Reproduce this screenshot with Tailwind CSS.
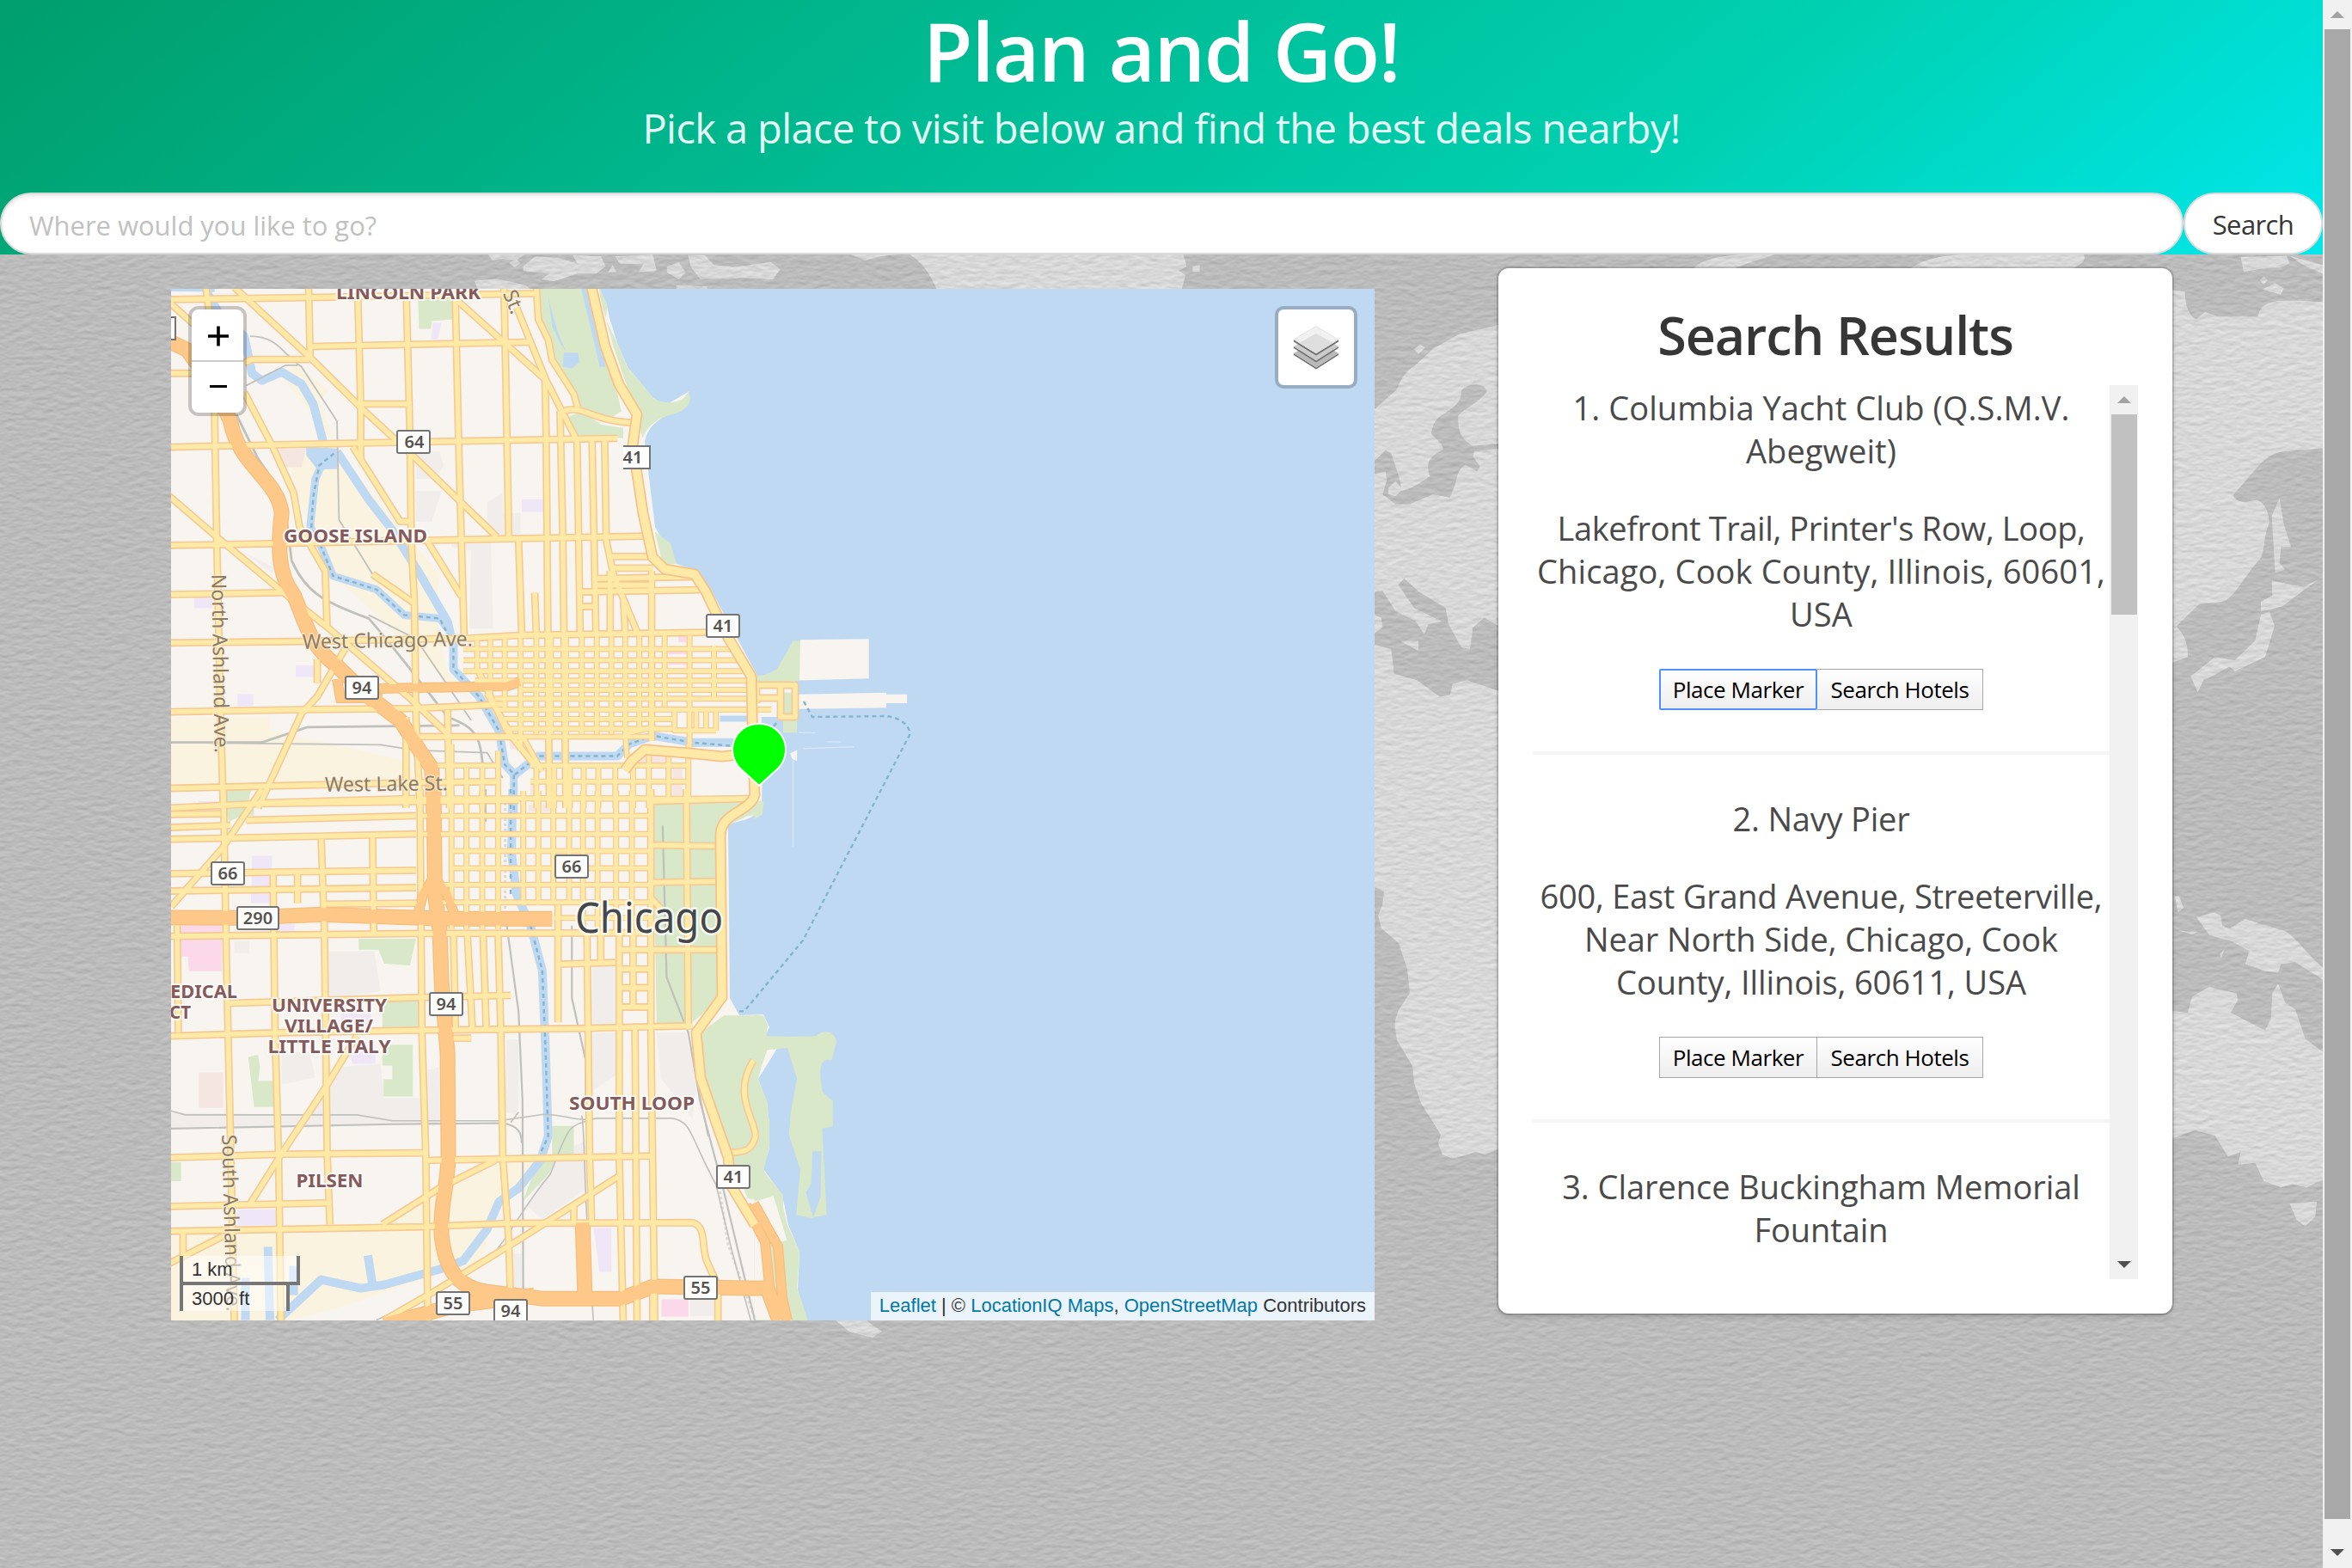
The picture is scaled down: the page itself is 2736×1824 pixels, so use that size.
<!DOCTYPE html>
<html lang="en">
<head>
<meta charset="utf-8">
<title>Plan and Go!</title>
<script src="https://cdn.jsdelivr.net/npm/@tailwindcss/browser@4"></script>
</head>
<body class="flex h-[1824px] w-[2736px] overflow-hidden bg-[#bbbbbb] font-['Open_Sans',sans-serif] text-[#4a4a4a]">

<div class="flex w-[2702px] shrink-0 flex-col">
  <!-- Hero -->
  <header class="flex h-[296px] flex-col bg-[linear-gradient(141deg,#009e6c_0%,#00d1b2_71%,#00e7eb_100%)] text-center">
    <h1 class="pt-[5px] text-[94px] leading-[108px] font-semibold tracking-[-1.42px] text-white">Plan and Go!</h1>
    <p class="mt-[6px] text-[47px] leading-[60px] tracking-[-0.6px] text-white/90">Pick a place to visit below and find the best deals nearby!</p>
    <form class="mt-[45px] flex h-[72px]">
      <div class="flex w-[2540px] items-center rounded-full border-2 border-[#dbdbdb] bg-white px-[32px] pt-[4px] text-[31px] tracking-[-0.03px] text-[#c1c1c1] shadow-[inset_0_2px_4px_rgba(10,10,10,0.1)]">Where would you like to go?</div>
      <div class="flex w-[162px] items-center justify-center rounded-full border-2 border-[#dbdbdb] bg-white pt-[2px] text-[31px] tracking-[-0.6px] text-[#363636]">Search</div>
    </form>
  </header>

  <main class="relative isolate flex h-[1528px] items-start overflow-hidden pl-[199px]">
    <!-- Paper world map backdrop -->
    <svg class="absolute inset-0 -z-10 h-full w-full" viewBox="0 296 2702 1528">
      <defs>
        <filter id="paper" x="0" y="0" width="100%" height="100%" color-interpolation-filters="sRGB">
          <feTurbulence type="fractalNoise" baseFrequency="0.08 0.17" numOctaves="2" seed="4"/>
          <feColorMatrix values="0 0 0 0 0  0 0 0 0 0  0 0 0 0 0  1 0 0 0 0"/>
          <feDiffuseLighting surfaceScale="0.38" diffuseConstant="1.1" lighting-color="#fff"><feDistantLight azimuth="265" elevation="60"/></feDiffuseLighting>
        </filter>
      </defs>
      <rect y="296" width="2702" height="1528" fill="#c5c5c5"/>
      <g fill="#e3e3e3">
        <g transform="translate(540 290) scale(.5485 .3333)">
          <path d="M945 18C965 40 985 70 1005 150H1520L1530 90L1515 75L1532 60L1525 18ZM820 18L850 40L880 25L920 18ZM125 60L150 25L200 30L240 50L230 20L290 25L300 60L280 85L240 85L190 112L165 105L180 85L125 75ZM50 18H130L110 38L80 33L60 38ZM95 48L110 34L119 48L107 62ZM320 25L400 18L408 75L370 80L380 50L330 50ZM305 80L315 55L323 80ZM430 60L455 45L470 80L455 105L430 80ZM475 20L510 20L530 55L570 62L650 45L670 70L655 105L600 100L500 103L480 60ZM22 110L70 103L130 125L145 145H30ZM450 125L515 130V145H450ZM1545 60L1560 55V78H1545Z"/>
        </g>
        <g transform="translate(1368 0) scale(.8726 .3333)">
          <path d="M690 936C705 900 730 885 800 886C770 915 740 930 735 960H690ZM975 945C1000 890 1040 885 1100 885L1210 888C1215 910 1205 925 1190 945Z"/>
        </g>
        <path d="M1599 476L1625 453C1630 440 1636 431 1645 426L1668 405L1697 389L1742 378L1800 378V1480H1590V476ZM1645 406L1652 401L1658 404L1650 412Z"/>
        <g transform="translate(2520 290) scale(.3333 .7526)">
          <path d="M-20 60L65 65C65 90 85 105 105 108L135 97L180 104H320C330 80 370 75 550 82V307L400 313C330 320 300 350 232 380C260 400 300 385 320 388C350 395 360 410 358 425C340 440 345 470 325 480C280 500 230 545 190 545L115 548L35 583C60 595 75 605 75 630L-20 645ZM260 12L420 10L430 22L400 28L330 30L270 35ZM430 10L550 25V38L480 25ZM326 48L340 42L354 48L340 54ZM335 62L380 52L410 60L400 70ZM368 412L395 385L410 425L435 460L400 460L395 485L415 495L380 500ZM368 512L420 517L480 522L540 508L480 527L440 540L405 552L330 560V545L370 535ZM330 565L360 560L378 582L345 630L240 652L220 645L150 662L130 665L110 685L85 660L170 630L240 635L310 605ZM30 1000H45L60 1018L40 1025ZM105 1032L165 1025L190 1030L195 1045L220 1050L275 1035L400 1052C440 1055 470 1080 550 1112V1130L450 1102L400 1105L390 1118L340 1115L275 1105L290 1085L230 1070L150 1060ZM40 1053L110 1055L90 1059ZM186 1090L205 1080L192 1095ZM-20 1175L75 1180L90 1155L150 1140L245 1150L250 1160L225 1180L290 1195L345 1207L365 1190L370 1150L390 1135L415 1165L450 1175L485 1220L550 1242V1437L490 1450L440 1445L400 1450L340 1440L310 1412L250 1415L260 1395L215 1402L170 1370L100 1362L-20 1380ZM430 1475L525 1472L520 1495L485 1510L455 1500Z"/>
        </g>
        <path d="M965 1530L988 1549L1015 1556L1026 1549L1000 1530Z"/>
      </g>
      <g fill="#c5c5c5">
        <g transform="translate(1590 290) scale(.3333 .3827)">
          <path d="M420 430C400 400 345 410 330 430C330 470 300 480 270 500C230 520 230 540 225 560C240 580 270 590 265 610C215 630 205 650 220 690C180 715 150 730 120 735C120 700 110 690 85 620L65 610L20 650V685L65 675L70 700L55 745L100 775H150L230 745L290 755C320 700 310 670 345 655L385 675L395 660L370 630L375 615L470 605V590L370 598C320 570 320 550 318 505C350 480 400 460 420 430ZM20 1040L55 1038L100 1100L170 1130L200 1170L215 1140L260 1130L165 1090L110 1020L130 1000L180 1040L275 1090L285 1140L330 1210L360 1215L370 1150L410 1120L470 1150V1345L350 1310L300 1320L290 1355L255 1360L175 1310L95 1290L85 1215L20 1200Z"/>
          <path fill="#e3e3e3" d="M75 725L100 705L125 730L100 750L75 745ZM20 1110L50 1120L55 1150L20 1170ZM115 1190L180 1190V1220Z"/>
        </g>
        <path d="M1590 1028L1610 1037L1608 1053L1603 1065L1607 1080L1627 1097L1637 1127L1640 1155L1627 1175C1620 1193 1623 1193 1625 1210L1643 1240L1645 1260L1653 1283L1676 1320L1673 1330L1678 1343L1690 1348L1717 1340L1727 1343L1745 1336H1800V1500H1590Z"/>
      </g>
      <rect class="mix-blend-multiply" y="296" width="2702" height="1528" filter="url(#paper)"/>
    </svg>

    <!-- Map -->
    <section class="relative mt-[40px] h-[1200px] w-[1400px] shrink-0 overflow-hidden bg-[#bfd9f2]">
      <svg class="absolute inset-0 h-full w-full [&_path]:[vector-effect:non-scaling-stroke]" viewBox="199 336 1400 1200" fill="none">
        <defs>
          <g id="roads">
            <g transform="translate(190 320) scale(.45918 .39541)">
              <path d="M15 72L370 66L950 54M370 210L935 197M205 258L225 248H370M15 289H80M505 379H620M15 506L130 503L500 494L1150 480M15 795L140 793L640 781L1215 768M15 940L300 934M15 1082L330 1078L780 1068L900 1060L1430 1050M15 1285L360 1278L640 1275L800 1266L860 1262M15 1510L640 1493L850 1490M15 1568L240 1555L900 1545"/>
              <path d="M108 36L125 200L130 420L135 760L145 1300L152 1568M368 36L372 245M493 75L500 380V540M616 75L625 480L628 780L636 960L640 1300L650 1568M740 75L748 490L755 780L762 1060M863 36L866 200L875 770M967 310L970 480L978 1568M1005 400L1012 770L1020 1568"/>
              <path d="M180 36L370 240L505 395L640 540L845 770M15 80L130 200M745 75L865 200L970 310M895 95L970 310L1045 480M945 36L950 130L975 190L985 250L1040 350L1050 390M15 650L130 765L300 930L420 1040L620 1240L720 1350M205 345L275 500L330 640L345 740L410 870L415 1040M480 505L600 725H625M530 880L635 965M670 785L755 945M460 1100L390 1240L350 1290L240 1568M390 1130V1200M1015 400C1060 380 1090 430 1190 435"/>
              <path d="M1048 480L1056 1060M1086 485L1096 1060M1118 485L1122 780L1140 880L1200 1050M1132 870V1060M1166 960L1170 1060M1237 870V1370M900 780L908 1060M941 935L945 1060M1130 828H1235M1140 862H1240M1095 893L1360 887M1095 912H1240M1055 932L1360 926M1060 975H1095"/>
              <path d="M610 1358H900M615 1300V1568M720 1280L725 1568M800 1170L870 1340L940 1440M820 1230L880 1350"/>
            </g>
            <g transform="translate(190 920) scale(.45918 .40179)">
              <path d="M15 68L145 66M15 106L170 100M15 140L400 131L640 125M210 85L640 72M240 35L640 22M15 240L300 235L640 230M15 290L640 280M400 328L660 325M15 421L640 413L1240 411M160 615L650 598L880 592M15 710L300 700L650 693L1050 688L1340 680M15 1062L300 1052L660 1048M665 1070L1240 1057M15 1203L415 1193M15 1275L660 1262L870 1252L1340 1250C1380 1260 1360 1330 1380 1370L1400 1420"/>
              <path d="M152 -5L160 500L170 1000L180 1540M400 140L408 400L415 1050L422 1255M530 135L533 410M278 240L283 700L292 1060L298 1540M340 240V325M650 -5L655 700L665 1060L670 1540M35 390L38 700M770 410L783 690M810 410L818 690M848 410L855 700L860 1060L875 1300L880 1490M735 410L740 690M1000 330V670M1073 400L1080 1060L1085 1250M1108 410V500M1000 502L1145 497M1155 410V1060L1165 1540M1190 410V620M1195 690L1200 1540M1235 -5V690L1245 1540M1155 460H1410M1155 516H1235M1155 570H1235M1155 626H1235M1325 -5L1330 690M1235 157L1410 160M1240 265L1405 262M1235 310L1260 340"/>
              <path d="M490 710L410 860L300 1050L220 1195M20 335L150 165L250 -5M15 1368L150 1290M50 1280V1345M555 1255L700 1150L840 1070M560 1532L700 1440L900 1300L1155 1115M1040 1200V1250M735 716H780M1240 30L1490 22M1240 1440V1540M1405 1450V1540"/>
              <path d="M1495 780C1440 880 1500 950 1500 1000C1490 1050 1460 1045 1430 1048"/>
            </g>
            <path d="M880 818V797H925V834H908V797M880 812H908"/>
          </g>
          <g id="grid">
            <g transform="translate(190 320) scale(.45918 .39541)">
              <path d="M760 1100H1445M760 1133H1460M760 1165H1475M790 1193H1490M905 1220H1500M840 1246H1500M840 1278H1540M860 1306H1290M870 1335H1290M870 1358H1240"/>
              <path d="M795 1060V1165M828 1060V1230M865 1060V1280M905 1060V1400M945 1060V1350M982 1060V1350M1020 1060V1350M1060 1060V1350M1098 1060V1350M1135 1060V1350M1170 1060V1350M1206 1060V1330M1270 1060V1270M1333 1060V1390M1395 1090V1250M1350 1280V1340M1375 1280V1340M1400 1280V1340M1295 1280V1340H1400M1240 1330L1170 1350L1175 1420"/>
              <path d="M660 1443H850M930 1443H1330M930 1490H1330M930 1540H1490M730 1380V1568M768 1440V1568M808 1440V1568M848 1400V1568M912 1360L960 1460M945 1440V1568M990 1440V1568M1030 1440V1568M1065 1440V1568M1102 1440V1568M1145 1440V1568M1190 1440V1568M1230 1380V1568M1280 1400V1540M1330 1380V1540"/>
            </g>
            <g transform="translate(190 920) scale(.45918 .40179)">
              <path d="M730 0V400M768 0V400M808 0V400M848 0V400M912 0V330M950 0V330M988 0V325M1028 0V325M1063 0V410M1100 0V410M1147 0V410M1187 0V410M650 22H1235M650 72H1235M650 125H1235M730 174H1235M730 224H1235M690 272H1235M700 323H1235M990 368H1235"/>
            </g>
          </g>
          <g id="lsd">
            <path d="M688 334L704 403L720 447L741 482L736 518L748 597L759 648L773 662L808 668L821 688L846 740L874 787L876 880L878 925C872 945 838 945 838 972L840 1160L810 1201L815 1254L847 1346L851 1380L878 1425"/>
            <path d="M877 876L840 880L800 876L750 872L735 885L727 896"/>
          </g>
          <g id="motorways">
            <g transform="translate(190 320) scale(.45918 .39541)">
              <path d="M15 195L60 220L130 330L170 430C190 560 290 600 300 700C290 800 290 880 330 940C360 1020 370 1090 440 1150L520 1240L600 1310L650 1400L680 1450L685 1590"/>
            </g>
            <g transform="translate(190 920) scale(.45918 .40179)">
              <path d="M685 -5L688 300L700 400L705 560L720 760L722 1060C720 1150 700 1200 705 1290C715 1390 750 1440 820 1450L960 1470H1160L1240 1435L1480 1440H1530L1560 1532M15 367L200 368L400 358L700 370H985M560 1545L740 1490L940 1460M1062 1250L1068 1460"/>
            </g>
          </g>
          <g id="ramps">
            <path d="M392 790L396 812L445 812M440 801L590 798L605 793M868 1402L890 1445L895 1495M877 1400L905 1450L910 1510L916 1536M485 1068L492 1040L505 1020L520 1040L530 1068"/>
          </g>
        </defs>

        <!-- Land -->
        <path fill="#f8f4f0" d="M190 330H695L706 356L709 370L718 399L730 427L759 462L773 472L802 455L780 482C765 486 752 500 750 514L762 613L787 656L812 664L828 688L881 786H925V800L927 836L888 840L886 938C878 957 850 955 847 960L849 1161L860 1181L888 1180L895 1195L890 1205L910 1210L882 1255L893 1285L895 1335L888 1360L910 1390L917 1425L930 1456L928 1500L940 1540H190Z"/>
        <!-- Areas -->
        <g transform="translate(190 320) scale(.45918 .39541)">
          <path fill="#faf3df" d="M290 290L340 265L420 340L395 370L440 510L560 690L700 880L690 1000L720 1180L640 1110L420 870L380 780L320 560L280 510L440 500L300 300ZM15 1300H270V1340L620 1430L640 1490L15 1500ZM420 880L620 950L700 1140L780 1250L720 1200L560 1010Z"/>
          <path fill="#d8e8c8" d="M645 72H733V130L680 135L678 158H648ZM950 40H1080L1140 290L1160 400L1130 425L1050 385L985 250L950 130ZM1105 36L1125 90L1120 130L1150 200L1175 270L1240 360C1270 390 1330 370 1330 340C1345 380 1320 400 1290 410C1250 420 1220 450 1215 480L1190 380L1140 210L1105 60ZM1020 420L1060 400L1110 440L1165 450V480L1050 470ZM1245 755L1285 790L1300 850L1265 850ZM1500 1190L1570 1150V1195L1510 1205ZM155 1510H190L230 1555V1590H155ZM1240 1545H1500V1590H1240Z"/>
          <path fill="#f0edea" d="M640 520H700L710 560L690 600H640ZM640 635H705L680 725H640ZM820 670L860 640V700L905 700V760L830 785L835 1040H775L780 810L730 800V785H820ZM210 820L280 860V880Z"/>
          <path fill="#efe6f8" d="M683 140H705L695 190H678ZM908 660H965V697H908ZM78 945H125V980H78ZM335 1148H383V1183H335ZM188 1233H228V1268H188ZM90 1548H140V1580H90Z"/>
          <path fill="#f6e6e2" d="M290 512L362 510L350 565H310ZM1180 1405H1280V1440H1180ZM1290 1450H1315V1530H1290ZM930 1490H950V1530H930ZM875 1365H905V1395H880Z"/>
          <path fill="#fbd9ea" d="M1280 1100H1328V1115H1280ZM1280 1131H1328V1146H1280ZM1305 1060H1325V1080H1305Z"/>
        </g>
        <g transform="translate(190 920) scale(.45918 .40179)">
          <path fill="#faf3df" d="M15 1285L500 1280L720 1150L850 1080L950 1070L930 1110L850 1190L800 1370L720 1390L460 1490L300 1540H15Z"/>
          <path fill="#f0edea" d="M415 465L535 465L550 580L450 600H415ZM300 760L370 755L385 830L300 850ZM440 800L550 790L560 890H660V810L700 800V960L15 975V930L370 940ZM1085 505H1145V690H1085ZM1250 700H1325L1350 860L1340 950L1260 830ZM870 720H900V940L865 930ZM1000 1050L1075 1010V1150L960 1240L920 1200ZM1085 700H1150V820L1085 870ZM1335 1470H1395V1520H1335ZM880 1340H910V1480H880ZM180 435H218V470H180Z"/>
          <path fill="#d8e8c8" d="M495 428H640L625 505L560 500L545 460H495ZM555 610H650V685H555ZM555 735H632V885H558V835H580V795H555ZM215 770L240 765L245 800L240 840H280V915H230ZM1240 35H1325V690H1250ZM1325 35H1500L1520 50L1430 100L1415 140V600L1340 670ZM155 -5H225L200 70L165 90ZM985 970H1040V1050L1000 1060L975 1110L910 1190L950 1070L985 1060ZM1420 650H1520L1532 680L1525 710L1580 712V745L1530 750L1505 830L1530 900L1535 1030L1520 1100L1570 1170V1240L1560 1190L1480 1180L1440 1060L1375 840L1360 700ZM15 1075H45V1130H15ZM1540 1330L1570 1310V1400Z"/>
          <path fill="#fbd9ea" d="M42 390H148V522H65L62 480H42ZM1262 1472H1330V1522H1262Z"/>
          <path fill="#efe6f8" d="M225 188H275V222L270 325H222ZM92 30H140V55H92ZM450 645H525V690H450ZM462 735H537V790H480ZM188 1212H288V1258H188ZM1090 1265H1135V1393H1105ZM292 385H332V410H292Z"/>
          <path fill="#f6e6e2" d="M90 815H152V918H90ZM925 40H945V60H925ZM960 40H980V60H960Z"/>
        </g>
        <g transform="translate(880 720) scale(.47194 .52934)">
          <path fill="#d8e8c8" d="M0 125L45 120L90 48H110V135L60 140L0 138ZM55 148L100 140V250H58ZM-5 870C20 870 30 890 25 918L145 917C165 900 195 905 197 930L185 970C150 960 155 1010 163 1040L188 1060V1115L162 1120L173 1310L140 1315L158 1270L160 1170H138L135 1240L122 1260L140 1317L98 1310L108 1210L80 1135L85 1080L100 1010L76 942H22L2 1020L32 1100V1155L15 1170C10 1210 30 1250 60 1270L75 1330L106 1390L100 1470L127 1542H-5ZM-5 400L18 400L15 430L-5 440Z"/>
          <path fill="#f8f4f0" d="M108 46L277 44V131L106 135ZM98 166L320 162V166H371V185H320V195L98 198ZM0 142L90 140V162H0ZM83 295L100 288V312L88 308ZM-5 1280L42 1268L75 1365L35 1376L40 1540H-5Z"/>
          <path stroke="#fff" stroke-opacity=".35" stroke-width="1.5" d="M90 310V500M105 250H145M115 285L240 281M175 270H208"/>
        </g>

        <!-- Inland water -->
        <g stroke="#bfd9f2" stroke-linejoin="round">
          <g transform="translate(190 320) scale(.45918 .39541)">
            <path stroke-width="10" d="M110 50L140 110L205 180L225 290L250 310L300 285L350 320L380 380L405 490"/>
            <path stroke-width="10" d="M440 520L520 660L580 750L650 880L690 960L720 1020L735 1090V1160L800 1240L850 1340L865 1440L890 1470L950 1415L1150 1415L1180 1380L1240 1355L1340 1375L1500 1375"/>
            <path stroke-width="9" d="M420 510L385 600L372 740L400 800L430 885L540 925L610 1000L700 1010L720 1040M888 1470V1590"/>
            <path stroke-width="7" d="M1410 1305H1480"/>
            <path fill="#bfd9f2" stroke="none" d="M15 36H130V50L70 48H15ZM362 505L440 510V570L390 572L362 530ZM1058 36H1085L1120 270H1106ZM1015 228L1050 228L1055 255L1035 275L1012 270ZM975 65L985 110L1000 170L1020 225L1005 200L985 150ZM1515 1300H1570V1568H1525Z"/>
          </g>
          <g transform="translate(190 920) scale(.45918 .40179)">
            <path stroke-width="10" d="M885 -5L882 180L895 300L930 390L960 520L968 740L975 1000L955 1070L900 1150L850 1190L820 1270L760 1360L700 1385L560 1430L500 1440L400 1415L290 1532M518 1345L530 1430M265 1320L270 1532M208 1410V1532M330 1375V1460"/>
          </g>
        </g>
        <g stroke="#85b5cc" stroke-width="2.4" stroke-dasharray="5 4">
          <g transform="translate(190 320) scale(.45918 .39541)">
            <path d="M432 525L395 560L380 650L375 740L400 800L430 885L540 925L610 1000L700 1010L735 1090V1160L800 1240L850 1340L865 1440L890 1470L950 1415L1150 1415L1180 1380L1240 1355L1340 1375L1440 1385M888 1470V1590"/>
          </g>
          <g transform="translate(190 920) scale(.45918 .40179)">
            <path d="M880 -5V300M930 390L960 520L968 740L975 1000L955 1050"/>
          </g>
          <path d="M935 816L945 834L1030 833C1048 834 1060 846 1058 855L934 1094L866 1176L856 1177M890 860L905 838"/>
        </g>

        <!-- Rail -->
        <g stroke="#c0c0bd">
          <g transform="translate(190 320) scale(.45918 .39541)">
            <path stroke-width="2.8" d="M185 410L240 540L305 650L325 840C360 930 400 960 520 1010C560 1060 640 1180 720 1300C810 1340 810 1360 812 1590M15 1375H250L365 1330L750 1325"/>
            <path stroke-width="1.8" d="M15 1375L550 1382L640 1398L820 1405L860 1480M220 180C290 180 300 230 350 270L440 430L445 720L530 880M520 1000L640 1070L780 1310M210 325L310 265H340"/>
          </g>
          <g transform="translate(190 920) scale(.45918 .40179)">
            <path stroke-width="3.5" d="M815 -5V90"/>
            <path stroke-width="2.2" d="M870 390L900 640L910 900L912 1540M15 978L580 965L860 962C900 970 908 990 908 1020M1265 100L1275 540L1330 700L1360 900L1420 1160L1500 1540M1035 390V600L1070 780V920"/>
            <path stroke-width="1.6" d="M15 925L55 938H490L580 955H850L960 937C1020 935 1040 960 1100 948H1290C1340 960 1330 990 1400 1140L1440 1330L1490 1540M900 930L880 960M1085 955C1020 960 1020 1000 980 1110C900 1220 880 1290 820 1360L700 1450L540 1532M1060 940C1070 1000 1060 1100 1090 1540M1345 800L1380 1000"/>
            <path stroke-width="3" stroke-opacity=".5" stroke-dasharray="3 3" d="M1410 1160L1430 1310L1500 1532M866 20V390"/>
          </g>
        </g>

        <!-- Streets: casing, then surface -->
        <g stroke="#f5c994" stroke-linejoin="round">
          <use href="#grid" stroke-width="7"/>
          <use href="#roads" stroke-width="8.8"/>
        </g>
        <use href="#motorways" stroke="#f6bd7c" stroke-width="18" stroke-linejoin="round"/>
        <use href="#ramps" stroke="#f6bd7c" stroke-width="12"/>
        <g stroke="#feeaa6" stroke-linejoin="round">
          <use href="#grid" stroke-width="4.6"/>
          <use href="#roads" stroke-width="5.6"/>
        </g>
        <use href="#motorways" stroke="#fec988" stroke-width="15.5" stroke-linejoin="round"/>
        <use href="#ramps" stroke="#fec988" stroke-width="9.5"/>
        <use href="#lsd" stroke="#f5c28a" stroke-width="13" stroke-linejoin="round"/>
        <use href="#lsd" stroke="#feeaa6" stroke-width="9.5" stroke-linejoin="round"/>

        <!-- Labels -->
        <g font-family="'Noto Sans', sans-serif" text-anchor="middle" stroke="#fff" stroke-opacity=".8" paint-order="stroke" stroke-linejoin="round">
          <g fill="#845a5c" font-size="20.5" font-weight="700" stroke-width="4">
            <text x="475" y="348" textLength="168" lengthAdjust="spacingAndGlyphs">LINCOLN PARK</text>
            <text x="413.500" y="630.500" textLength="167" lengthAdjust="spacingAndGlyphs">GOOSE ISLAND</text>
            <text x="383" y="1177" textLength="134" lengthAdjust="spacingAndGlyphs">UNIVERSITY</text>
            <text x="382.500" y="1201" textLength="103" lengthAdjust="spacingAndGlyphs">VILLAGE/</text>
            <text x="383" y="1225" textLength="143" lengthAdjust="spacingAndGlyphs">LITTLE ITALY</text>
            <text x="383.500" y="1381" textLength="78" lengthAdjust="spacingAndGlyphs">PILSEN</text>
            <text x="735" y="1290.500" textLength="146" lengthAdjust="spacingAndGlyphs">SOUTH LOOP</text>
            <text x="276" y="1161" text-anchor="end" textLength="78" lengthAdjust="spacingAndGlyphs">EDICAL</text>
            <text x="222" y="1185" text-anchor="end">CT</text>
          </g>
          <g fill="#8c7b62" font-size="23.5" stroke="#f8f0dc" stroke-opacity=".6" stroke-width="3">
            <text x="451" y="753" textLength="198" lengthAdjust="spacingAndGlyphs" transform="rotate(-1 451 753)">West Chicago Ave.</text>
            <text x="449.500" y="920" textLength="143" lengthAdjust="spacingAndGlyphs" transform="rotate(-.7 449.500 920)">West Lake St.</text>
            <text transform="translate(248 772) rotate(89)" textLength="208" lengthAdjust="spacingAndGlyphs">North Ashland Ave.</text>
            <text transform="translate(261 1423) rotate(88.500)" textLength="206" lengthAdjust="spacingAndGlyphs">South Ashland Ave.</text>
            <text transform="translate(590 354) rotate(68)">St.</text>
          </g>
          <text x="755" y="1085" font-size="49" fill="#45484b" stroke-width="5" textLength="172" lengthAdjust="spacingAndGlyphs">Chicago</text>
        </g>

        <!-- Route shields -->
        <g fill="#fdfdfc" stroke="#747474" stroke-width="2">
          <rect x="462" y="501" width="38" height="26" rx="2"/>
          <path d="M725 519H756V545H725"/>
          <rect x="822" y="715" width="38" height="26" rx="2"/>
          <rect x="402" y="787" width="38" height="26" rx="2"/>
          <rect x="246" y="1003" width="38" height="26" rx="2"/>
          <rect x="646" y="995" width="38" height="26" rx="2"/>
          <rect x="276" y="1055" width="48" height="26" rx="2"/>
          <rect x="500" y="1155" width="38" height="26" rx="2"/>
          <rect x="834" y="1356" width="38" height="26" rx="2"/>
          <rect x="796" y="1485" width="38" height="26" rx="2"/>
          <rect x="508" y="1503" width="38" height="26" rx="2"/>
          <rect x="575" y="1512" width="38" height="30" rx="2"/>
          <path d="M190 369H204V395H190"/>
        </g>
        <g font-family="'Noto Sans', sans-serif" font-size="20" font-weight="600" fill="#55534f" text-anchor="middle">
          <text x="482" y="521">64</text><text x="736" y="539">41</text><text x="841" y="735">41</text><text x="421" y="807">94</text>
          <text x="265" y="1023">66</text><text x="665" y="1015">66</text><text x="300" y="1075">290</text><text x="519" y="1175">94</text>
          <text x="853" y="1376">41</text><text x="815" y="1505">55</text><text x="527" y="1523">55</text><text x="594" y="1532">94</text>
        </g>

        <!-- Marker -->
        <path fill="#0f0" stroke="#fff" stroke-width="2" d="M883 914L861 894C843 876 853 842 883 842C913 842 923 876 905 894Z"/>
      </svg>

      <!-- Zoom control -->
      <div class="absolute top-[20px] left-[20px] w-[68px] overflow-hidden rounded-[12px] border-4 border-black/20 bg-white bg-clip-padding">
        <div class="flex h-[61px] items-center justify-center border-b-2 border-[#ccc] pt-[3px] pl-[2px]">
          <svg class="h-6 w-6" viewBox="0 0 24 24" stroke="#000" stroke-width="3.600"><path d="M0 12H24M12 0.500V23.500"/></svg>
        </div>
        <div class="flex h-[59px] items-center justify-center pb-[2px] pl-[2px]">
          <svg class="h-6 w-5" viewBox="0 0 20 24" stroke="#000" stroke-width="3"><path d="M0 11.500H20"/></svg>
        </div>
      </div>

      <!-- Layers control -->
      <div class="absolute top-[20px] right-[20px] flex h-[96px] w-[96px] items-center justify-center rounded-[10px] border-4 border-black/20 bg-white bg-clip-padding">
        <svg class="h-[52px] w-[52px]" viewBox="0 0 52 52">
          <path fill="#6f6f6f" d="M0 33L26 49.500L52 33V35L26 51.500L0 35Z"/><path fill="#b9b9b9" d="M0 33L26 17L52 33L26 49.500Z"/>
          <path fill="#6f6f6f" d="M0 25L26 41.500L52 25V27L26 43.500L0 27Z"/><path fill="#cbcbcb" d="M0 25L26 9L52 25L26 41.500Z"/>
          <path fill="#6f6f6f" d="M0 17L26 33L52 17V19.500L26 35.500L0 19.500Z"/><path fill="#f1f1f1" stroke="#d5d5d5" stroke-width=".6" d="M0 17L26 1.500L52 17L26 33Z"/>
          <path fill="#dedede" d="M6 21L26 10L46 21L26 33Z"/>
        </svg>
      </div>

      <!-- Scale -->
      <div class="absolute bottom-[11px] left-[10px] flex flex-col items-start font-['Liberation_Sans',sans-serif] text-[22px] text-[#333]">
        <div class="h-[34px] w-[140px] border-4 border-t-0 border-[#777] bg-white/50 pl-[10px] leading-[32px]">1 km</div>
        <div class="-mt-[4px] h-[34px] w-[128px] border-4 border-b-0 border-[#777] bg-white/50 pl-[10px] leading-[32px]">3000 ft</div>
      </div>

      <!-- Attribution -->
      <div class="absolute right-0 bottom-0 h-[33px] bg-white/70 px-[10px] font-['Liberation_Sans',sans-serif] text-[22px] leading-[32px] whitespace-nowrap text-[#333]"><span class="text-[#0078a8]">Leaflet</span> | © <span class="text-[#0078a8]">LocationIQ Maps</span>, <span class="text-[#0078a8]">OpenStreetMap</span> Contributors</div>
    </section>

    <!-- Search results -->
    <aside class="mt-[16px] ml-[144px] flex h-[1216px] w-[784px] shrink-0 flex-col rounded-[12px] bg-white p-[40px] shadow-[0_4px_6px_rgba(10,10,10,0.15),0_0_0_2px_rgba(10,10,10,0.15)]">
      <h2 class="h-[96px] shrink-0 pt-[2px] text-center text-[61px] leading-[72px] font-semibold tracking-[-1.08px] text-[#363636]">Search Results</h2>
      <div class="flex h-[1040px] shrink-0 overflow-hidden">
        <div class="w-[671px] shrink-0 text-center text-[38px] leading-[50px] whitespace-nowrap">
          <p class="-mb-px pt-px tracking-[0.07px]">1. Columbia Yacht Club (Q.S.M.V.<br>Abegweit)</p>
          <p class="mt-[40px] -mb-px pt-px tracking-[0.13px]"><span class="tracking-[-0.4px]">Lakefront Trail, Printer's Row, Loop,</span><br>Chicago, Cook County, Illinois, 60601,<br>USA</p>
          <div class="mt-[40px] flex h-[48px] justify-center text-[26px] leading-[46px] tracking-[-0.45px] text-black">
            <div class="w-[184px] rounded-[2px] border-2 border-[#4d90fe] bg-linear-to-b from-white to-[#eee] leading-[45px]">Place Marker</div>
            <div class="w-[193px] border border-l-0 border-[#a6a6a6] bg-linear-to-b from-white to-[#eee]">Search Hotels</div>
          </div>
          <div class="mt-[48px] h-[4px] bg-[#f5f5f5]"></div>

          <p class="mt-[48px] -mb-px pt-px tracking-[-0.2px]">2. Navy Pier</p>
          <p class="mt-[40px] -mb-px pt-px tracking-[-0.1px]"><span class="tracking-[-0.25px]">600, East Grand Avenue, Streeterville,</span><br>Near North Side, Chicago, Cook<br>County, Illinois, 60611, USA</p>
          <div class="mt-[40px] flex h-[48px] justify-center text-[26px] leading-[46px] tracking-[-0.45px] text-black">
            <div class="w-[184px] border border-[#a6a6a6] bg-linear-to-b from-white to-[#eee]">Place Marker</div>
            <div class="w-[193px] border border-l-0 border-[#a6a6a6] bg-linear-to-b from-white to-[#eee]">Search Hotels</div>
          </div>
          <div class="mt-[48px] h-[4px] bg-[#f5f5f5]"></div>

          <p class="mt-[48px] -mb-px pt-px tracking-[-0.05px]">3. Clarence Buckingham Memorial<br>Fountain</p>
        </div>
        <!-- List scrollbar -->
        <div class="flex w-[33px] shrink-0 flex-col items-center bg-[#f1f1f1]">
          <div class="flex h-[34px] items-center"><svg class="h-2 w-4" viewBox="0 0 16 8"><path fill="#a3a3a3" d="M0 8L8 0L16 8Z"/></svg></div>
          <div class="h-[233px] w-[30px] bg-[#c1c1c1]"></div>
          <div class="mt-auto flex h-[34px] items-center"><svg class="h-2 w-4" viewBox="0 0 16 8"><path fill="#505050" d="M0 0L8 8L16 0Z"/></svg></div>
        </div>
      </div>
    </aside>
  </main>
</div>

<!-- Window scrollbar -->
<div class="flex w-[34px] shrink-0 flex-col items-center bg-[#f1f1f1]">
  <div class="flex h-[34px] items-center"><svg class="h-2 w-4" viewBox="0 0 16 8"><path fill="#a3a3a3" d="M0 8L8 0L16 8Z"/></svg></div>
  <div class="h-[1733px] w-[30px] bg-[#a8a8a8]"></div>
  <div class="flex grow items-center pt-[20px]"><svg class="h-2 w-4" viewBox="0 0 16 8"><path fill="#505050" d="M0 0L8 8L16 0Z"/></svg></div>
</div>
</body>
</html>
